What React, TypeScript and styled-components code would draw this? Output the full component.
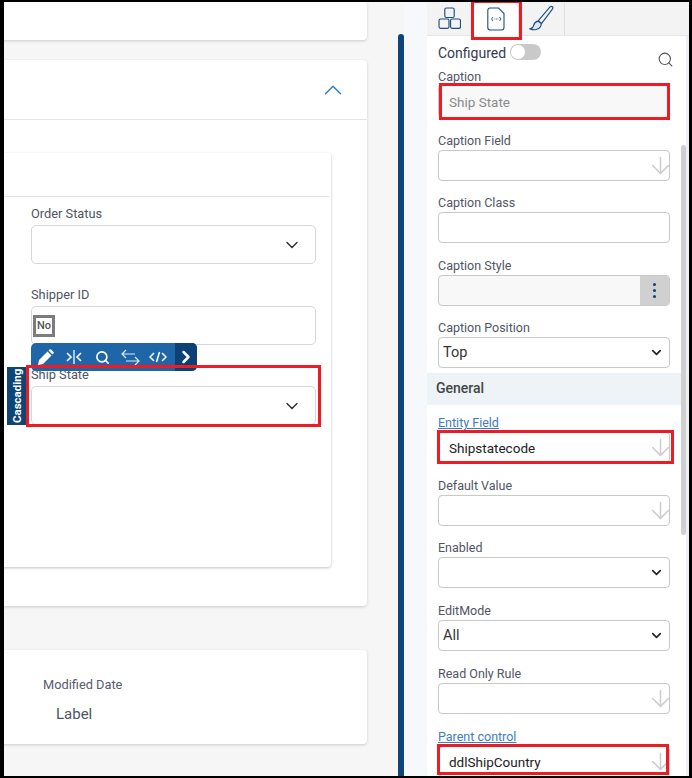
import { createGlobalStyle } from "styled-components";
import styled from "styled-components";
import { Search, ChevronDown, ChevronUp, ArrowDown, ChevronRight } from "lucide-react";

const GlobalStyle = createGlobalStyle`
    html, body {
        margin: 0;
        padding: 0;
        background: #fff;
        font-family: Roboto, "Liberation Sans", sans-serif;
    }
    * { box-sizing: border-box; }
`;

const Frame = styled.div`
    width: 692px;
    height: 778px;
    display: flex;
    overflow: hidden;
    border: solid #000;
    border-width: 2px 3px 2px 4px;
    background: #f5f5f5;
`;

/* left side: form designer canvas */
const Canvas = styled.div`
    width: 394px;
    flex: none;
    overflow: hidden;
    padding-right: 31px;
    background: #f6f6f6;
`;
const Card = styled.div<{ $h: number; $mt: number }>`
    position: relative;
    height: ${(p) => p.$h}px;
    margin: ${(p) => p.$mt}px 0 0 -20px;
    background: #fff;
    border-radius: 0 4px 4px 0;
    box-shadow: 0 1px 3px rgba(0, 0, 0, 0.18);
`;
const CardHeader = styled.div`
    height: 60px;
    display: flex;
    align-items: center;
    justify-content: flex-end;
    padding: 0 19px 0 0;
    border-bottom: 1px solid #e4e4e4;
    color: #2f7fd4;
`;
const InnerWrap = styled.div`
    padding: 33px 36px 0 0;
`;
const InnerCard = styled.div`
    height: 414px;
    background: #fff;
    border-radius: 0 4px 4px 0;
    box-shadow: 0 1px 3px rgba(0, 0, 0, 0.25);
`;
const InnerHeader = styled.div`
    height: 44px;
    margin-right: 2px;
    border-bottom: 1px solid #e2e2e2;
`;
const InnerBody = styled.div`
    padding: 9px 15px 0 47px;
    display: flex;
    flex-direction: column;
`;
const DesignField = styled.div<{ $mt?: number }>`
    position: relative;
    margin-top: ${(p) => p.$mt ?? 0}px;
`;
const DesignLabel = styled.div`
    font-size: 12.8px;
    line-height: 15px;
    color: #4f5464;
    margin-bottom: 4px;
`;
const DesignBox = styled.div`
    height: 39px;
    display: flex;
    align-items: center;
    justify-content: flex-end;
    padding: 0 13px 0 1px;
    background: #fff;
    border: 1px solid #d3d6dc;
    border-radius: 5px;
    color: #333;
`;
const NoMark = styled.span`
    margin-right: auto;
    width: 22px;
    height: 22px;
    display: flex;
    align-items: center;
    justify-content: center;
    border: 3px solid #7c7c7c;
    font-size: 11px;
    font-weight: 500;
    color: #555;
`;
const Toolbar = styled.div`
    position: absolute;
    left: 0;
    top: -24px;
    width: 166px;
    height: 28px;
    display: flex;
    align-items: center;
    padding-left: 1px;
    background: #1f66a8;
    border-radius: 5px;
    color: #fff;
    overflow: hidden;
`;
const ToolSlot = styled.span`
    width: 28px;
    flex: none;
    display: flex;
    align-items: center;
    justify-content: center;
`;
const ToolbarEnd = styled.div`
    margin-left: auto;
    width: 22px;
    height: 100%;
    display: flex;
    align-items: center;
    justify-content: center;
    background: #0b4174;
`;
const CascadeTag = styled.div`
    position: absolute;
    left: -24px;
    top: 0;
    width: 19px;
    height: 58px;
    display: flex;
    align-items: center;
    justify-content: center;
    background: #0f4477;
    color: #fff;
    font-size: 11.5px;
    font-weight: 700;
    writing-mode: vertical-rl;
    transform: rotate(180deg);
`;
const FooterBody = styled.div`
    padding: 27px 0 0 59px;
`;
const FooterLabel = styled.div`
    font-size: 12.8px;
    line-height: 15px;
    color: #565b6c;
`;
const FooterValue = styled.div`
    margin: 13px 0 0 13px;
    font-size: 15px;
    line-height: 18px;
    color: #4f5464;
`;

const ScrollRail = styled.div`
    width: 6px;
    flex: none;
    background: #f6f6f6;
`;
const ScrollThumb = styled.div`
    height: 742px;
    margin-top: 32px;
    background: #0f4477;
    border-radius: 3px 3px 0 0;
`;
const Gutter = styled.div`
    width: 23px;
    flex: none;
    background: #f6f8fc;
`;

/* right side: property panel */
const Panel = styled.div`
    position: relative;
    flex: 1;
    min-width: 0;
    background: #fff;
    overflow: hidden;
`;
const Tabs = styled.div`
    height: 34px;
    display: flex;
    background: #f3f3f3;
    border-bottom: 1px solid #e4e4e4;
`;
const Tab = styled.div<{ $active?: boolean }>`
    width: 46px;
    height: ${(p) => (p.$active ? 34 : 33)}px;
    display: flex;
    align-items: center;
    justify-content: center;
    background: ${(p) => (p.$active ? "#fff" : "transparent")};
    border-right: 1px solid #dfdfdf;
`;
const PanelBody = styled.div`
    padding: 8px 0 0 0;
`;
const ConfiguredRow = styled.div`
    height: 18px;
    margin-bottom: 7px;
    display: flex;
    align-items: center;
    gap: 4px;
    padding-left: 11px;
    font-size: 14px;
    color: #333a4d;
`;
const Toggle = styled.span`
    width: 31px;
    height: 16px;
    display: flex;
    align-items: center;
    padding-left: 1px;
    margin-top: -2px;
    border-radius: 8px;
    background: #c9c9c9;
    &::before {
        content: "";
        width: 14px;
        height: 14px;
        border-radius: 50%;
        background: #fff;
    }
`;
const SearchIcon = styled.span`
    margin: 12px 0 0 auto;
    padding-right: 15px;
    display: flex;
    color: #555;
`;
const PropField = styled.div<{ $h: number }>`
    height: ${(p) => p.$h}px;
    padding: 0 19px 0 11px;
`;
const PropLabel = styled.div<{ $link?: boolean; $tight?: boolean }>`
    font-size: 12.5px;
    line-height: 15px;
    color: ${(p) => (p.$link ? "#3d7cbc" : "#505565")};
    text-decoration: ${(p) => (p.$link ? "underline" : "none")};
    margin-bottom: ${(p) => (p.$tight ? 0 : 2)}px;
`;
const PropInput = styled.div<{ $fill?: boolean; $h?: number }>`
    position: relative;
    height: ${(p) => p.$h ?? 31}px;
    display: flex;
    align-items: center;
    padding-left: 10px;
    background: ${(p) => (p.$fill ? "#f8f8f8" : "#fff")};
    border: 1px solid #c9c9c9;
    border-radius: 4px;
    font-size: 13.5px;
    color: #222;
    overflow: hidden;
`;
const MutedValue = styled.span`
    margin-top: 1px;
    color: #8b8b8b;
`;
const SelectValue = styled.span`
    margin-left: -6px;
    font-size: 14.5px;
    color: #333;
`;
const FieldArrow = styled.span`
    margin: 0 -5px 0 auto;
    display: flex;
    color: #cdcdcd;
`;
const SelectCaret = styled.span`
    margin-left: auto;
    padding-right: 5px;
    display: flex;
    color: #222;
`;
const DotsButton = styled.span`
    margin-left: auto;
    width: 29px;
    height: 100%;
    display: flex;
    flex-direction: column;
    align-items: center;
    justify-content: center;
    gap: 3px;
    background: #d0d0d0;
    & i {
        width: 3px;
        height: 3px;
        border-radius: 50%;
        background: #0f4477;
    }
`;
const Section = styled.div`
    height: 32px;
    margin-bottom: 10px;
    display: flex;
    align-items: center;
    padding: 0 0 2px 9px;
    background: #edf3f7;
    font-size: 14px;
    font-weight: 500;
    color: #444;
`;
const PanelScroll = styled.div`
    position: absolute;
    right: 0;
    top: 34px;
    bottom: 0;
    width: 3px;
    background: #eceff3;
`;
const PanelThumb = styled.div`
    position: absolute;
    right: 3px;
    top: 143px;
    width: 5px;
    height: 390px;
    border-radius: 3px;
    background: #cfcfcf;
`;

/* red annotation boxes drawn over the shot */
const Mark = styled.div<{ $x: number; $y: number; $w: number; $h: number }>`
    position: absolute;
    left: ${(p) => p.$x}px;
    top: ${(p) => p.$y}px;
    width: ${(p) => p.$w}px;
    height: ${(p) => p.$h}px;
    border: 3px solid #ed1c24;
    pointer-events: none;
`;

const Mirror = () => (
    <svg width="18" height="16" viewBox="0 0 18 16" fill="none" stroke="#fff" strokeWidth="1.6">
        <path d="M9 1v14" stroke="#cfe0f0" />
        <path d="M2 4l4 4-4 4M16 4l-4 4 4 4" />
    </svg>
);
const Swap = () => (
    <svg width="19" height="17" viewBox="0 0 19 17" fill="none" stroke="#dbe7f3" strokeWidth="1.2">
        <path d="M5 1L1 5l4 4M1 5h13M14 8l4 4-4 4M18 12H5" />
    </svg>
);
const Pencil = () => (
    <svg width="16" height="16" viewBox="0 0 16 16" fill="#fff">
        <path d="M0 16l1-5 8.500-8.500 4 4L5 15zM10.500 1.500l1-1q.8-.7 1.600 0l2.400 2.400q.7.8 0 1.600l-1 1z" />
    </svg>
);
const CodeTag = () => (
    <svg width="18" height="12" viewBox="0 0 18 12" fill="none" stroke="#fff" strokeWidth="1.500">
        <path d="M5 2L1 6l4 4M13 2l4 4-4 4M10.500 1l-3 10" />
    </svg>
);
const BlocksIcon = () => (
    <svg width="23" height="23" viewBox="0 0 22 22" fill="none" stroke="#1c4f80" strokeWidth="1.100">
        <rect x="6.500" y="1" width="9" height="9" rx="1.500" />
        <rect x="1" y="11.500" width="9.500" height="9" rx="1.500" />
        <rect x="12" y="11.500" width="9.500" height="9" rx="1.500" />
    </svg>
);
const CodeFileIcon = () => (
    <svg width="18" height="24" viewBox="0 0 18 24" fill="none" stroke="#1c4f80" strokeWidth="1.100">
        <path d="M3 1h8.500L17 6.500V20.500a2.500 2.500 0 0 1-2.500 2.500H3A2.500 2.500 0 0 1 .8 20.500V3.500A2.500 2.500 0 0 1 3 1z" />
        <path d="M6 10l-1.500 2L6 14M12.500 10l1.500 2-1.500 2" strokeWidth=".9" />
        <path d="M7.500 12h.8M9 12h.8M10.500 12h.8" strokeWidth=".9" />
    </svg>
);
const BrushIcon = () => (
    <svg width="25" height="27" viewBox="0 0 24 26" fill="none" stroke="#1c4f80" strokeWidth="1.100">
        <path d="M9 15L20 2q1.500-1.300 2.500-.3t-.2 2.500L12 18z" />
        <path d="M8.500 15.500c-2.500.5-3.500 2-4 4-.3 1.500-1.500 3-3.500 3.500 3.500 1.500 8.500.8 10-2 .8-1.500.8-2.500.5-3.500z" fill="#dfe6ee" />
    </svg>
);

const LookupField = ({ label, value, link, h }: { label: string; value?: string; link?: boolean; h: number }) => (
    <PropField $h={h}>
        <PropLabel $link={link}>{label}</PropLabel>
        <PropInput>
            {value}
            <FieldArrow><ArrowDown size={27} strokeWidth={1.4} /></FieldArrow>
        </PropInput>
    </PropField>
);

const SelectField = ({ label, value, h }: { label: string; value?: string; h: number }) => (
    <PropField $h={h}>
        <PropLabel>{label}</PropLabel>
        <PropInput>
            <SelectValue>{value}</SelectValue>
            <SelectCaret><ChevronDown size={15} strokeWidth={2.6} /></SelectCaret>
        </PropInput>
    </PropField>
);

export default function App() {
    return (
        <>
            <GlobalStyle />
            <Frame>
                <Canvas>
                    <Card $h={38} $mt={0} />
                    <Card $h={546} $mt={20}>
                        <CardHeader><ChevronUp size={30} strokeWidth={1.2} /></CardHeader>
                        <InnerWrap>
                            <InnerCard>
                                <InnerHeader />
                                <InnerBody>
                                    <DesignField>
                                        <DesignLabel>Order Status</DesignLabel>
                                        <DesignBox><ChevronDown size={20} strokeWidth={1.8} /></DesignBox>
                                    </DesignField>
                                    <DesignField $mt={23}>
                                        <DesignLabel>Shipper ID</DesignLabel>
                                        <DesignBox><NoMark>No</NoMark></DesignBox>
                                    </DesignField>
                                    <DesignField $mt={22}>
                                        <CascadeTag>Cascading</CascadeTag>
                                        <DesignLabel>Ship State</DesignLabel>
                                        <DesignBox><ChevronDown size={20} strokeWidth={1.8} /></DesignBox>
                                        <Toolbar>
                                            <ToolSlot><Pencil /></ToolSlot>
                                            <ToolSlot><Mirror /></ToolSlot>
                                            <ToolSlot><Search size={15} strokeWidth={2.6} /></ToolSlot>
                                            <ToolSlot><Swap /></ToolSlot>
                                            <ToolSlot><CodeTag /></ToolSlot>
                                            <ToolbarEnd><ChevronRight size={20} strokeWidth={3} /></ToolbarEnd>
                                        </Toolbar>
                                    </DesignField>
                                </InnerBody>
                            </InnerCard>
                        </InnerWrap>
                        <Mark $x={42} $y={305} $w={295} $h={62} />
                    </Card>
                    <Card $h={94} $mt={44}>
                        <FooterBody>
                            <FooterLabel>Modified Date</FooterLabel>
                            <FooterValue>Label</FooterValue>
                        </FooterBody>
                    </Card>
                </Canvas>
                <ScrollRail><ScrollThumb /></ScrollRail>
                <Gutter />
                <Panel>
                    <Tabs>
                        <Tab><BlocksIcon /></Tab>
                        <Tab $active><CodeFileIcon /></Tab>
                        <Tab><BrushIcon /></Tab>
                    </Tabs>
                    <PanelBody>
                        <ConfiguredRow>
                            Configured
                            <Toggle />
                            <SearchIcon><Search size={17} strokeWidth={1.5} /></SearchIcon>
                        </ConfiguredRow>
                        <PropField $h={64}>
                            <PropLabel $tight>Caption</PropLabel>
                            <PropInput $fill $h={34}><MutedValue>Ship State</MutedValue></PropInput>
                        </PropField>
                        <LookupField label="Caption Field" h={62} />
                        <PropField $h={63}>
                            <PropLabel>Caption Class</PropLabel>
                            <PropInput />
                        </PropField>
                        <PropField $h={62}>
                            <PropLabel>Caption Style</PropLabel>
                            <PropInput $fill>
                                <DotsButton><i /><i /><i /></DotsButton>
                            </PropInput>
                        </PropField>
                        <SelectField label="Caption Position" value="Top" h={53} />
                        <Section>General</Section>
                        <LookupField label="Entity Field" value="Shipstatecode" link h={63} />
                        <LookupField label="Default Value" h={62} />
                        <SelectField label="Enabled" h={63} />
                        <SelectField label="EditMode" value="All" h={63} />
                        <LookupField label="Read Only Rule" h={63} />
                        <LookupField label="Parent control" value="ddlShipCountry" link h={48} />
                    </PanelBody>
                    <PanelScroll />
                    <PanelThumb />
                    <Mark $x={44} $y={-2} $w={51} $h={40} />
                    <Mark $x={12} $y={81} $w={231} $h={37} />
                    <Mark $x={10} $y={428} $w={237} $h={34} />
                    <Mark $x={10} $y={742} $w={232} $h={31} />
                </Panel>
            </Frame>
        </>
    );
}
